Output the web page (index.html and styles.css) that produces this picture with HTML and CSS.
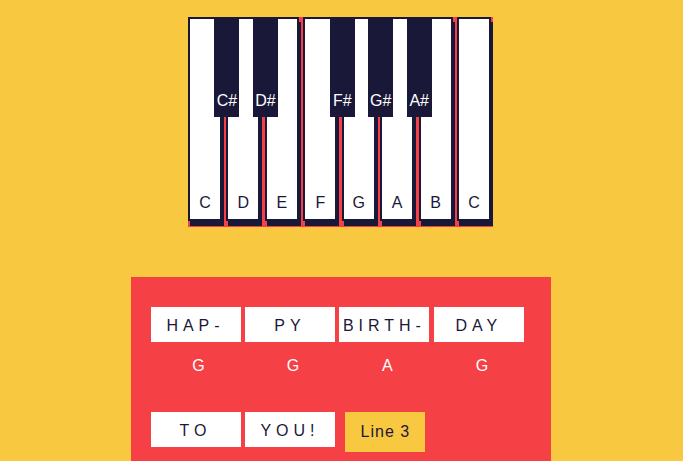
FILE: index.html
```html
<!DOCTYPE html>
<html lang="en">
<head>
<meta charset="utf-8">
<meta name="viewport" content="width=device-width, initial-scale=1">
<title>Piano Player</title>
<link rel="stylesheet" href="styles.css">
</head>
<body>
<main class="page">
  <section class="keyboard" aria-label="Piano keyboard">
    <div class="slot"><button class="key" type="button">C</button><button class="key sharp" type="button">C#</button></div>
    <div class="slot"><button class="key" type="button">D</button><button class="key sharp" type="button">D#</button></div>
    <div class="slot"><button class="key" type="button">E</button></div>
    <div class="slot"><button class="key" type="button">F</button><button class="key sharp" type="button">F#</button></div>
    <div class="slot"><button class="key" type="button">G</button><button class="key sharp" type="button">G#</button></div>
    <div class="slot"><button class="key" type="button">A</button><button class="key sharp" type="button">A#</button></div>
    <div class="slot"><button class="key" type="button">B</button></div>
    <div class="slot"><button class="key" type="button">C</button></div>
  </section>
  <section class="song" aria-label="Song">
    <div class="words">
      <span class="word">HAP-</span>
      <span class="word">PY</span>
      <span class="word">BIRTH-</span>
      <span class="word">DAY</span>
    </div>
    <div class="notes">
      <span class="note">G</span>
      <span class="note">G</span>
      <span class="note">A</span>
      <span class="note">G</span>
    </div>
    <div class="words">
      <span class="word">TO</span>
      <span class="word">YOU!</span>
      <button class="next" type="button">Line 3</button>
    </div>
  </section>
</main>
</body>
</html>
```
FILE: styles.css
```css
:root {
  --navy: #191838;
  --yellow: #f8c840;
  --red: #f54046;
}

* {
  box-sizing: border-box;
}

body {
  margin: 0;
  background: var(--yellow);
  color: var(--navy);
  font: 16px/18px "Liberation Sans", Arial, sans-serif;
}

button {
  font: inherit;
  color: inherit;
  cursor: pointer;
}

.page {
  display: flex;
  flex-direction: column;
  align-items: center;
  gap: 50px;
  min-height: 100vh;
  padding: 17px 2px 0 0;
}

.keyboard {
  padding: 0 2px 6px 0;
  background: var(--red);
  white-space: nowrap;
}

.slot {
  position: relative;
  display: inline-block;
  width: 34px;
  vertical-align: top;
}

.key {
  display: flex;
  align-items: flex-end;
  justify-content: center;
  width: 100%;
  height: 204px;
  padding: 0 0 7px;
  border: 2px solid var(--navy);
  border-radius: 0;
  background: #fff;
  box-shadow: 2px 5px var(--navy);
}

.sharp {
  position: absolute;
  z-index: 1;
  top: 0;
  left: 78%;
  width: 25px;
  height: 100px;
  border: 0;
  background: var(--navy);
  box-shadow: none;
  color: #fff;
}

.song {
  flex: 1;
  width: 420px;
  max-width: 100%;
  padding: 30px 20px 0;
  background: var(--red);
}

.word,
.note {
  display: inline-block;
  width: 90px;
  text-align: center;
  vertical-align: top;
}

.word {
  padding: 10px 0 7px;
  background: #fff;
  letter-spacing: 5px;
}

.notes {
  padding: 15px 0 37px 3px;
  color: #fff;
}

.next {
  width: 80px;
  height: 40px;
  margin-left: 6px;
  padding: 0;
  border: 0;
  background: var(--yellow);
  letter-spacing: 1px;
  vertical-align: top;
}
```
